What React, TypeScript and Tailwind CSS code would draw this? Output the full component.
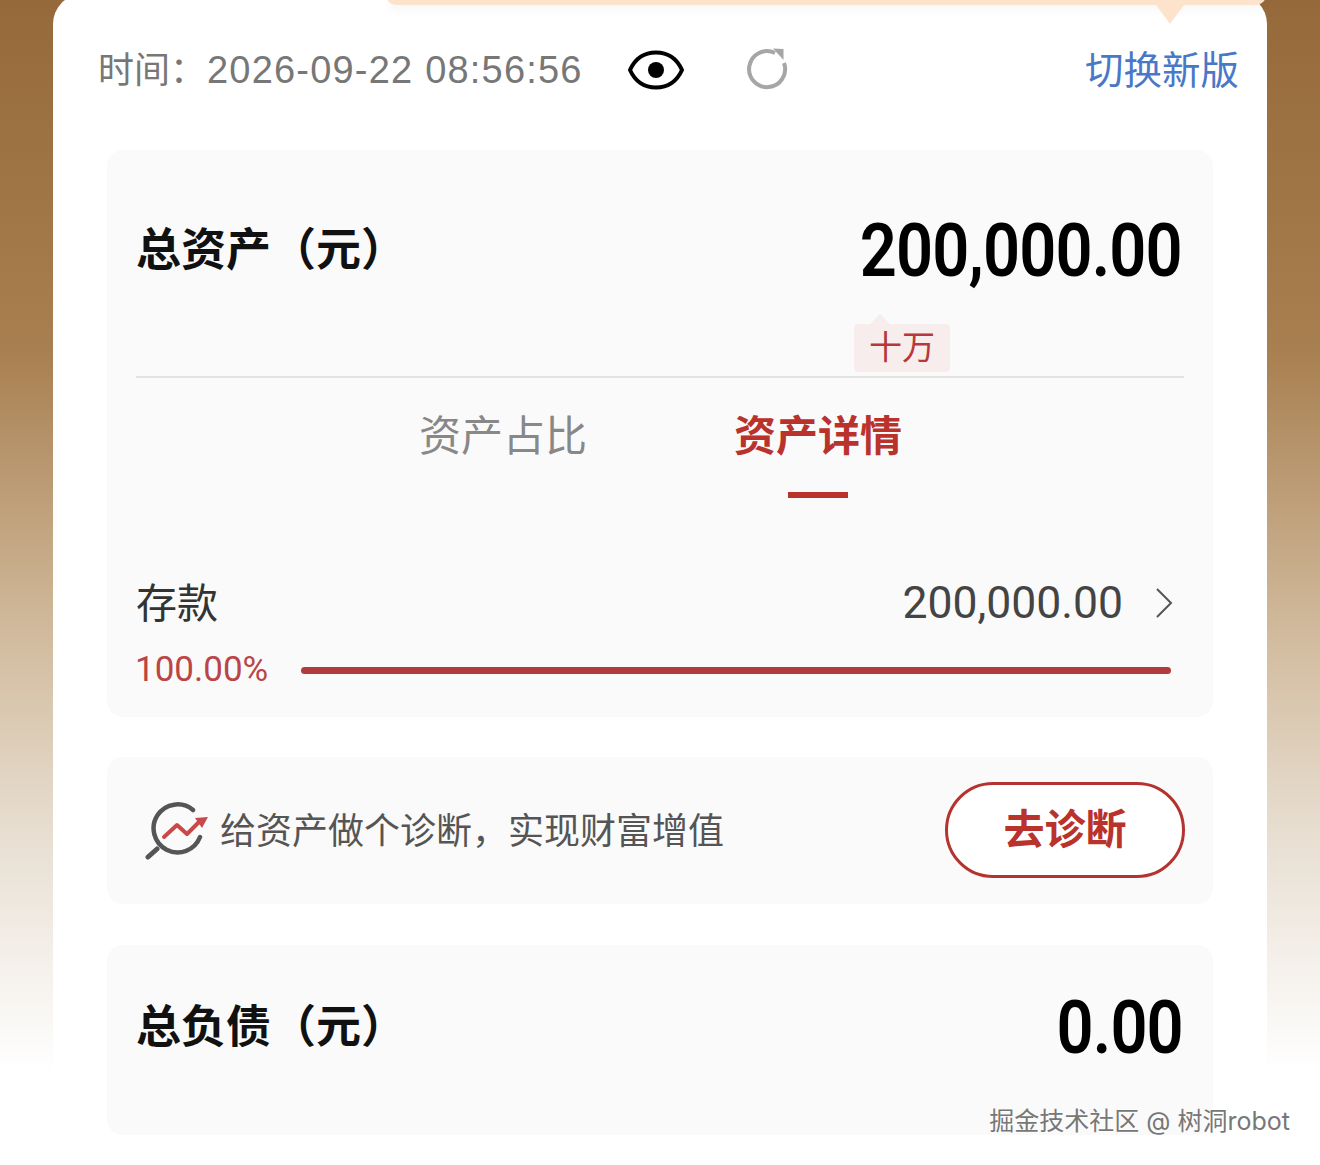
const cjk = "font-['Inter','Noto_Sans_CJK_SC',sans-serif]";

const AssetRow = () => (
  <div className="mt-[80px] pl-[29px] pr-[40px]">
    <div className="flex items-center justify-between h-[50px]">
      <span className="text-[41px] leading-[50px] text-[#333]">存款</span>
      <div className="flex items-center">
        <span className="text-[44.5px] leading-[50px] text-[#444] font-['Roboto',sans-serif]">200,000.00</span>
        <svg width="18" height="32" viewBox="0 0 18 32" className="ml-[32px]" fill="none" stroke="#555" strokeWidth="2">
          <path d="M2 2l14 14L2 30" />
        </svg>
      </div>
    </div>
    <div className="flex items-center mt-[22px] pr-[2px]">
      <span className="w-[165px] -ml-px text-[35px] leading-[40px] text-[#bb4446] font-['Roboto',sans-serif]">100.00%</span>
      <div className="ml-px flex-1 h-[7px] rounded-full bg-[#b13a3c]" />
    </div>
  </div>
);

export default function App() {
  return (
    <div className={`relative h-[1165px] w-[1320px] overflow-hidden bg-[linear-gradient(180deg,#96693a_0%,#a87f50_30%,#d2bc9f_55%,#e8dfd2_72%,#ffffff_92%)] px-[53px] ${cjk}`}>
      <div className="relative h-[1200px] rounded-t-[30px] bg-white -mt-[6px] pt-[6px]">
        {/* tip banner peeking in from above */}
        <div className="absolute left-[333px] top-0 w-[880px] h-[11px] rounded-b-[10px] bg-[#fde3cb] shadow-[0_6px_10px_rgba(0,0,0,0.03)]" />
        <div className="absolute left-[1103px] top-[11px] w-0 h-0 border-x-[14px] border-x-transparent border-t-[19px] border-t-[#fde3cb]" />

        {/* header */}
        <div className="flex items-center h-[140px] mb-[10px] pl-[45px] pr-[28px]">
          <span className="text-[36px] text-[#777] leading-[44px]">时间：</span>
          <span className="text-[38px] text-[#777] leading-[44px] ml-[1px] font-['Liberation_Sans',sans-serif] tracking-[1.2px]">2026-09-22 08:56:56</span>
          <svg width="56" height="40" viewBox="0 0 56 40" className="ml-[45px] -mt-[1px]" fill="none">
            <path d="M2 20C7 9 16 2.500 28 2.500S49 9 54 20c-5 11-14 17.500-26 17.500S7 31 2 20z" stroke="#000" strokeWidth="4" />
            <circle cx="28" cy="20" r="8" fill="#000" />
          </svg>
          <svg width="42" height="42" viewBox="0 0 42 42" className="ml-[62px] -mt-[2px]" fill="none" stroke="#a6a6a6" strokeWidth="4">
            <path d="M38 15A18 18 0 1 1 29 5" />
            <path d="M27 0.500L37.500 1V12z" fill="#a6a6a6" stroke="none" />
          </svg>
          <span className="ml-auto text-[38.5px] leading-[48px] text-[#4a78c8]">切换新版</span>
        </div>

        <div className="px-[54px]">
          {/* total assets */}
          <div className="h-[567px] rounded-[16px] bg-[#fafafa] pt-[40px]">
            <div className="mx-[29px] h-[188px] border-b-2 border-[#e2e2e2]">
              <div className="flex items-center justify-between h-[120px]">
                <span className="text-[45px] leading-[120px] font-bold text-[#111]">总资产（元）</span>
                <span className="inline-block origin-right scale-x-[0.866] mr-[2px] text-[75px] leading-[120px] font-semibold text-black tracking-[-1px] font-['Roboto',sans-serif]">200,000.00</span>
              </div>
              <div className="flex justify-end mr-[234px]">
                <div className="relative mt-[14px] h-[48px] w-[96px] rounded-[4px] bg-[#f8eded] text-center text-[33px] leading-[46px] text-[#b5393a]">
                  <div className="absolute left-[16px] -top-[10px] w-0 h-0 border-x-[10px] border-x-transparent border-b-[10px] border-b-[#f8eded]" />
                  十万
                </div>
              </div>
            </div>

            {/* tabs */}
            <div className="flex mt-[30px] pl-[312px]">
              <span className="w-[315px] text-[42px] leading-[56px] text-[#888]">资产占比</span>
              <div className="flex flex-col items-center w-[168px]">
                <span className="text-[42px] leading-[56px] font-bold text-[#b9322c]">资产详情</span>
                <div className="mt-[28px] w-[60px] h-[6px] bg-[#b9322c]" />
              </div>
            </div>

            <AssetRow />
          </div>

          {/* diagnosis */}
          <div className="flex items-center h-[147px] mt-[40px] rounded-[16px] bg-[#fafafa] pl-[38px] pr-[28px]">
            <svg width="66" height="60" viewBox="0 0 66 60" fill="none" strokeLinecap="round">
              <path d="M48 9A24 24 0 1 0 55 36" stroke="#555" strokeWidth="4.5" />
              <path d="M12 48L3 56" stroke="#555" strokeWidth="5" />
              <path d="M19 36l13-12 10 9 12-12" stroke="#c9494a" strokeWidth="4" strokeLinejoin="round" />
              <path d="M50 17l13-1-6 11z" fill="#c9494a" />
            </svg>
            <span className="ml-[9px] text-[36px] leading-[44px] text-[#555]">给资产做个诊断，实现财富增值</span>
            <button type="button" className="ml-auto mb-[1px] w-[240px] h-[96px] rounded-full border-[3px] border-[#b5332e] bg-white text-[41px] font-bold text-[#b9322c]">
              去诊断
            </button>
          </div>

          {/* total liabilities */}
          <div className="flex items-center justify-between h-[190px] mt-[41px] rounded-[16px] bg-[#fafafa] pl-[29px] pr-[30px]">
            <span className="text-[45px] leading-[120px] font-bold text-[#111] -mt-[26px]">总负债（元）</span>
            <span className="inline-block origin-right scale-x-[0.866] text-[75px] leading-[120px] font-semibold text-black tracking-[-1px] -mt-[26px] font-['Roboto',sans-serif]">0.00</span>
          </div>
        </div>
      </div>

      {/* watermark */}
      <div className="absolute right-[30px] top-[1103px] text-[25px] leading-[36px] text-[#777] [text-shadow:0_0_2px_#fff]">掘金技术社区 @ 树洞robot</div>
    </div>
  );
}
